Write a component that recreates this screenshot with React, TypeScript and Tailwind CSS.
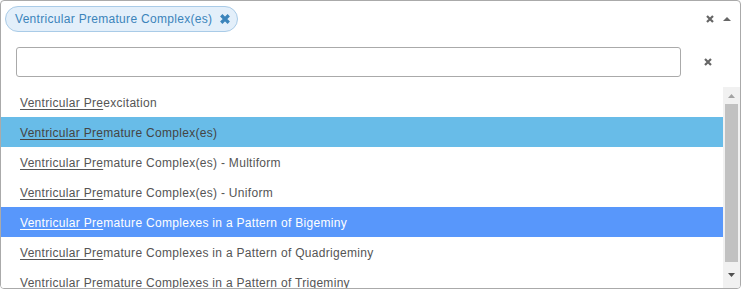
import React from 'react';

const options = [
  { rest: 'excitation', state: 'none' },
  { rest: 'mature Complex(es)', state: 'selected' },
  { rest: 'mature Complex(es) - Multiform', state: 'none' },
  { rest: 'mature Complex(es) - Uniform', state: 'none' },
  { rest: 'mature Complexes in a Pattern of Bigeminy', state: 'active' },
  { rest: 'mature Complexes in a Pattern of Quadrigeminy', state: 'none' },
  { rest: 'mature Complexes in a Pattern of Trigeminy', state: 'none' },
];

function Cross({ className, size = 8, stroke = 2.2 }: { className?: string; size?: number; stroke?: number }) {
  return (
    <svg width={size} height={size} viewBox="0 0 8 8" className={className}>
      <path d="M1 1 L7 7 M7 1 L1 7" stroke="currentColor" strokeWidth={stroke} strokeLinecap="butt" fill="none" />
    </svg>
  );
}

function Option({ rest, state }: { rest: string; state: string }) {
  const rowClass =
    state === 'active'
      ? 'bg-[#5897fb] text-white'
      : state === 'selected'
      ? 'bg-[#68bce8] text-[#444]'
      : 'bg-white text-[#555]';
  return (
    <li className={`h-[30px] shrink-0 flex items-center pl-[19px] pt-[1px] whitespace-nowrap ${rowClass}`}>
      <span className="underline underline-offset-[2px]">Ventricular Pre</span>
      <span>{rest}</span>
    </li>
  );
}

export default function App() {
  return (
    <div className="w-[741px] h-[289px] bg-white" style={{ fontFamily: '"Liberation Sans", Arial, sans-serif' }}>
      <div className="w-full h-full border border-[#aaa] rounded-[4px] flex flex-col overflow-hidden text-[12px] tracking-[0.3px]">
        {/* selection */}
        <div className="h-[37px] shrink-0 flex items-start pt-[5px] pl-[4px] pr-[9px]">
          <div className="h-[26px] flex items-center pl-[9px] pr-[7px] rounded-full bg-[#e3effa] border border-[#a9cbe7] text-[#3b84bb]">
            <span>Ventricular Premature Complex(es)</span>
            <Cross className="ml-[8px] text-[#3b84bb]" size={10} stroke={2.6} />
          </div>
          <div className="ml-auto h-[26px] flex items-center gap-[9px]">
            <Cross className="text-[#666]" />
            <svg width="8" height="4" viewBox="0 0 8 4" className="text-[#666]">
              <path d="M0 4 L4 0 L8 4 Z" fill="currentColor" />
            </svg>
          </div>
        </div>

        {/* search */}
        <div className="shrink-0 flex items-center pt-[9px] pb-[10px] pl-[15px]">
          <input
            type="text"
            className="w-[665px] h-[30px] border border-[#aaa] rounded-[3px] outline-none px-2 text-[12px]"
          />
          <Cross className="ml-[23px] text-[#666]" />
        </div>

        {/* results */}
        <div className="flex-1 flex min-h-0">
          <ul className="flex-1 flex flex-col overflow-hidden">
            {options.map((o, i) => (
              <Option key={i} rest={o.rest} state={o.state} />
            ))}
          </ul>
          <div className="w-[17px] shrink-0 bg-[#f1f1f1] flex flex-col items-center">
            <div className="h-[17px] flex items-center justify-center">
              <svg width="7" height="4" viewBox="0 0 7 4">
                <path d="M0 4 L3.5 0 L7 4 Z" fill="#a3a3a3" />
              </svg>
            </div>
            <div className="w-[13px] h-[158px] bg-[#c1c1c1]" />
            <div className="flex-1 flex items-center justify-center">
              <svg width="7" height="4" viewBox="0 0 7 4">
                <path d="M0 0 L3.5 4 L7 0 Z" fill="#505050" />
              </svg>
            </div>
          </div>
        </div>
      </div>
    </div>
  );
}
